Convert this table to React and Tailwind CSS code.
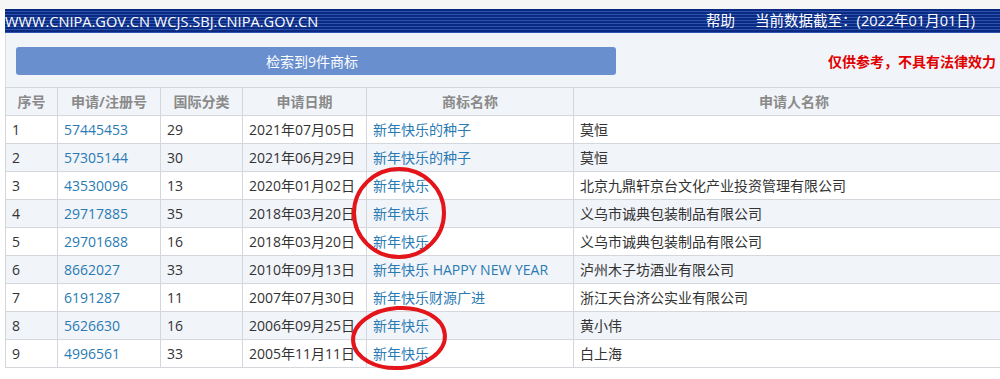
import React from "react";

const rows = [
  ["1", "57445453", "29", "2021年07月05日", "新年快乐的种子", "莫恒"],
  ["2", "57305144", "30", "2021年06月29日", "新年快乐的种子", "莫恒"],
  ["3", "43530096", "13", "2020年01月02日", "新年快乐", "北京九鼎轩京台文化产业投资管理有限公司"],
  ["4", "29717885", "35", "2018年03月20日", "新年快乐", "义乌市诚典包装制品有限公司"],
  ["5", "29701688", "16", "2018年03月20日", "新年快乐", "义乌市诚典包装制品有限公司"],
  ["6", "8662027", "33", "2010年09月13日", "新年快乐 HAPPY NEW YEAR", "泸州木子坊酒业有限公司"],
  ["7", "6191287", "11", "2007年07月30日", "新年快乐财源广进", "浙江天台济公实业有限公司"],
  ["8", "5626630", "16", "2006年09月25日", "新年快乐", "黄小伟"],
  ["9", "4996561", "33", "2005年11月11日", "新年快乐", "白上海"],
];

const heads = ["序号", "申请/注册号", "国际分类", "申请日期", "商标名称", "申请人名称"];

export default function App() {
  return (
    <div className="relative w-[1000px] h-[379px] overflow-hidden bg-white font-['Open_Sans','Noto_Sans_CJK_SC',sans-serif] text-[14px]">
      <div className="h-[9px] bg-[#f6f6f6]" />
      <div className="ml-[5px] w-[1100px] h-[24px] flex items-center text-white bg-[repeating-linear-gradient(to_bottom,#0a2a82_0px,#0a2a82_2px,#2c53ad_2px,#2c53ad_3px)]">
        <span className="w-[995px] flex items-center">
          <span className="leading-none text-[14.6px]">WWW.CNIPA.GOV.CN WCJS.SBJ.CNIPA.GOV.CN</span>
          <span className="ml-auto mr-[25px] flex gap-[20px] leading-none text-[14.5px]">
            <span>帮助</span>
            <span>当前数据截至：(2022年01月01日)</span>
          </span>
        </span>
      </div>
      <div className="ml-[5px] h-[54px] bg-[#f1f4f9] border-l border-[#d8dde3] flex items-center pl-[10px] pt-[2px]">
        <div className="w-[600px] h-[28px] rounded-[3px] bg-[#6a8fcf] text-white flex items-center justify-center pr-[8px]">
          检索到9件商标
        </div>
        <div className="ml-auto mr-[4px] text-[#e00000] font-bold">仅供参考，不具有法律效力</div>
      </div>
      <table className="ml-[5px] w-[1010px] border-collapse table-fixed">
        <colgroup>
          <col className="w-[52px]" />
          <col className="w-[103px]" />
          <col className="w-[82px]" />
          <col className="w-[124px]" />
          <col className="w-[207px]" />
          <col />
        </colgroup>
        <thead>
          <tr className="h-[28px] bg-[#f1f4f9]">
            {heads.map((h) => (
              <th key={h} className="border border-[#d4d8dd] text-center font-bold text-[#8a8a8a] p-0">
                {h}
              </th>
            ))}
          </tr>
        </thead>
        <tbody>
          {rows.map((r, i) => (
            <tr key={r[0]} className={`h-[28px] ${i % 2 === 1 ? "bg-[#f1f4f9]" : "bg-white"}`}>
              {r.map((c, j) => (
                <td
                  key={j}
                  className={`border border-[#d4d8dd] px-[6px] py-0 whitespace-nowrap ${
                    j === 1 || j === 4 ? "text-[#2a7ab3]" : "text-[#333333]"
                  }`}
                >
                  {c}
                </td>
              ))}
            </tr>
          ))}
        </tbody>
      </table>
      <svg className="absolute left-0 top-0 pointer-events-none" width="1000" height="379">
        <ellipse cx="399" cy="213" rx="45" ry="44" fill="none" stroke="#e3141a" strokeWidth="4" />
        <ellipse cx="399" cy="338" rx="46" ry="30" fill="none" stroke="#e3141a" strokeWidth="4" transform="rotate(-4 399 338)" />
      </svg>
    </div>
  );
}
